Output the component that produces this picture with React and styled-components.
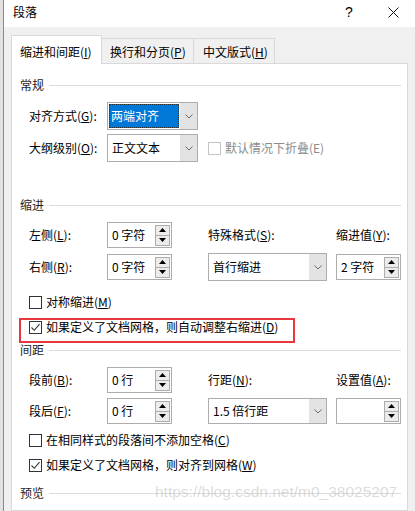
import React from 'react';
import styled, { createGlobalStyle } from 'styled-components';

const Global = createGlobalStyle`
  html, body { margin: 0; padding: 0; background: #f0f0f0; }
  body {
    width: 415px; height: 511px; overflow: hidden;
    font-family: "Noto Sans CJK SC", "Microsoft YaHei", sans-serif;
    font-size: 12px; line-height: 16px; color: #000;
  }
  u { text-underline-offset: 1px; }
`;

const Screen = styled.div`
  position: relative;
  display: flex;
  width: 415px;
  height: 511px;
  overflow: hidden;
`;

const Edge = styled.div`
  width: 3px;
  flex: none;
  background: #e2e2e2;
`;

const Dialog = styled.div`
  flex: 1;
  min-width: 0;
  display: flex;
  flex-direction: column;
  background: #f0f0f0;
  border-left: 1px solid #8a8a8a;
`;

const TitleBar = styled.div`
  height: 27px;
  flex: none;
  display: flex;
  align-items: center;
  background: #fff;
  padding: 0 0 3px 9px;
  box-sizing: border-box;
`;

const Title = styled.span`
  font-size: 12px;
`;

const HelpBtn = styled.div`
  margin-left: auto;
  width: 30px;
  margin-right: 7px;
  text-align: center;
  font-family: "Liberation Sans", sans-serif;
  font-size: 14px;
`;

const CloseBtn = styled.div`
  width: 44px;
  display: flex;
  justify-content: center;
  align-items: center;
`;

const TabBar = styled.div`
  display: flex;
  align-items: flex-end;
  height: 28px;
  margin-top: 8px;
  padding-left: 7px;
  flex: none;
`;

const Tab = styled.div`
  box-sizing: border-box;
  width: ${p => p.$w}px;
  height: ${p => (p.$active ? 29 : 25)}px;
  margin-bottom: ${p => (p.$active ? -1 : 0)}px;
  margin-left: ${p => (p.$first ? 0 : -1)}px;
  padding: ${p => (p.$active ? 8 : 5)}px 0 0 ${p => p.$pl}px;
  border: 1px solid #d9d9d9;
  border-bottom: none;
  background: ${p => (p.$active ? '#fff' : '#f0f0f0')};
  position: ${p => (p.$active ? 'relative' : 'static')};
  white-space: nowrap;
`;

const Panel = styled.div`
  margin-left: 7px;
  width: 397px;
  box-sizing: border-box;
  flex: 1;
  border: 1px solid #d9d9d9;
  background: #fff;
  padding: 13px 6px 0 8px;
`;

const SectionHeader = styled.div`
  display: flex;
  align-items: center;
  height: 16px;
  margin-top: ${p => p.$mt || 0}px;
  color: #1e1e1e;
  &::after {
    content: "";
    flex: 1;
    height: 1px;
    background: #dcdcdc;
    margin-left: 5px;
  }
`;

const Row = styled.div`
  display: grid;
  grid-template-columns: 78px 101px 128px 65px;
  align-items: center;
  height: ${p => p.$h}px;
  margin-top: ${p => p.$mt}px;
  padding-left: 9px;
  white-space: nowrap;
`;

const Label = styled.span`
  white-space: nowrap;
`;

const SelectBox = styled.div`
  box-sizing: border-box;
  display: flex;
  width: ${p => p.$w}px;
  height: ${p => p.$h}px;
  border: 1px solid #adadad;
  background: #fff;
`;

const SelectValue = styled.div`
  flex: 1;
  display: flex;
  align-items: center;
  padding: 1px;
  padding-left: ${p => (p.$selected ? 1 : 4)}px;
`;

const Highlight = styled.div`
  flex: 1;
  align-self: stretch;
  display: flex;
  align-items: center;
  padding-left: 2px;
  background: #0078d7;
  color: #fff;
  outline: 1px dotted #2b2b2b;
  outline-offset: -1px;
`;

const DropBtn = styled.div`
  width: 17px;
  flex: none;
  display: flex;
  align-items: center;
  justify-content: center;
  background: #e3e3e3;
`;

const SpinBox = styled.div`
  box-sizing: border-box;
  display: flex;
  align-items: center;
  width: 65px;
  height: 26px;
  border: 1px solid #adadad;
  background: #fff;
  padding-left: 4px;
`;

const SpinText = styled.span`
  flex: 1;
  white-space: nowrap;
`;

const SpinBtns = styled.div`
  display: flex;
  flex-direction: column;
  width: 15px;
  margin-right: 1px;
`;

const SpinBtn = styled.div`
  box-sizing: border-box;
  height: 11px;
  border: 1px solid #adadad;
  margin-top: ${p => (p.$down ? -1 : 0)}px;
  background: #ececec;
  display: flex;
  align-items: center;
  justify-content: center;
`;

const CheckRow = styled.label`
  position: relative;
  display: flex;
  align-items: center;
  height: 20px;
  margin-top: ${p => p.$mt || 0}px;
  margin-left: ${p => (p.$inline ? 0 : 9)}px;
  gap: 4px;
  white-space: nowrap;
  color: ${p => (p.$disabled ? '#8c8c8c' : '#000')};
  ${p => p.$annotated && `
    &::after {
      content: "";
      position: absolute;
      left: -10px;
      top: 1px;
      width: 276px;
      height: 25px;
      box-sizing: border-box;
      border: 2px solid #e8383d;
      pointer-events: none;
    }
  `}
`;

const Box = styled.span`
  box-sizing: border-box;
  width: 13px;
  height: 13px;
  flex: none;
  border: 1px solid ${p => (p.$disabled ? '#c4c4c4' : '#333')};
  background: #fff;
  display: flex;
  align-items: center;
  justify-content: center;
`;

const Watermark = styled.div`
  position: absolute;
  left: 155px;
  top: 483px;
  font-family: "Liberation Sans", Arial, sans-serif;
  font-size: 15.5px;
  line-height: 18px;
  color: rgba(175, 175, 175, 0.45);
  white-space: nowrap;
  pointer-events: none;
`;

const Chevron = () => (
  <svg width="8" height="5" viewBox="0 0 8 5">
    <path d="M0.5 0.5 L4 4 L7.5 0.5" fill="none" stroke="#6a6a6a" strokeWidth="1" />
  </svg>
);

const Tri = ({ down }) => (
  <svg width="7" height="4" viewBox="0 0 7 4">
    <path d={down ? 'M0 0 H7 L3.5 4 Z' : 'M0 4 H7 L3.5 0 Z'} fill="#000" />
  </svg>
);

const Select = ({ value, w, h = 28, selected }) => (
  <SelectBox $w={w} $h={h}>
    <SelectValue $selected={selected}>
      {selected ? <Highlight>{value}</Highlight> : value}
    </SelectValue>
    <DropBtn><Chevron /></DropBtn>
  </SelectBox>
);

const Spin = ({ value }) => (
  <SpinBox>
    <SpinText>{value}</SpinText>
    <SpinBtns>
      <SpinBtn><Tri /></SpinBtn>
      <SpinBtn $down><Tri down /></SpinBtn>
    </SpinBtns>
  </SpinBox>
);

const Check = ({ checked, disabled, children, mt, inline, annotated }) => (
  <CheckRow $mt={mt} $inline={inline} $disabled={disabled} $annotated={annotated}>
    <Box $disabled={disabled}>
      {checked && (
        <svg width="11" height="11" viewBox="0 0 11 11">
          <path d="M1.5 5.5 L4.3 8.3 L9.5 2.2" fill="none" stroke="#333" strokeWidth="1.1" />
        </svg>
      )}
    </Box>
    <span>{children}</span>
  </CheckRow>
);

export default function App() {
  return (
    <>
      <Global />
      <Screen>
        <Edge />
        <Dialog>
          <TitleBar>
            <Title>段落</Title>
            <HelpBtn>?</HelpBtn>
            <CloseBtn>
              <svg width="11" height="11" viewBox="0 0 11 11">
                <path d="M0.5 0.5 L10.5 10.5 M10.5 0.5 L0.5 10.5" stroke="#111" strokeWidth="1" />
              </svg>
            </CloseBtn>
          </TitleBar>

          <TabBar>
            <Tab $active $first $w={91} $pl={8}>缩进和间距(<u>I</u>)</Tab>
            <Tab $w={93} $pl={8}>换行和分页(<u>P</u>)</Tab>
            <Tab $w={82} $pl={9}>中文版式(<u>H</u>)</Tab>
          </TabBar>

          <Panel>
            <SectionHeader>常规</SectionHeader>
            <Row $h={28} $mt={9}>
              <Label>对齐方式(<u>G</u>):</Label>
              <Select value="两端对齐" w={91} selected />
            </Row>
            <Row $h={28} $mt={4}>
              <Label>大纲级别(<u>O</u>):</Label>
              <Select value="正文文本" w={91} />
              <Check disabled inline>默认情况下折叠(E)</Check>
            </Row>

            <SectionHeader $mt={35}>缩进</SectionHeader>
            <Row $h={26} $mt={9}>
              <Label>左侧(<u>L</u>):</Label>
              <Spin value="0 字符" />
              <Label>特殊格式(<u>S</u>):</Label>
              <Label>缩进值(<u>Y</u>):</Label>
            </Row>
            <Row $h={28} $mt={5}>
              <Label>右侧(<u>R</u>):</Label>
              <Spin value="0 字符" />
              <Select value="首行缩进" w={119} />
              <Spin value="2 字符" />
            </Row>
            <Check mt={11}>对称缩进(<u>M</u>)</Check>
            <Check checked mt={5} annotated>如果定义了文档网格，则自动调整右缩进(<u>D</u>)</Check>

            <SectionHeader $mt={5}>间距</SectionHeader>
            <Row $h={26} $mt={9}>
              <Label>段前(<u>B</u>):</Label>
              <Spin value="0 行" />
              <Label>行距(<u>N</u>):</Label>
              <Label>设置值(<u>A</u>):</Label>
            </Row>
            <Row $h={26} $mt={5}>
              <Label>段后(<u>F</u>):</Label>
              <Spin value="0 行" />
              <Select value="1.5 倍行距" w={119} h={26} />
              <Spin value="" />
            </Row>
            <Check mt={6}>在相同样式的段落间不添加空格(<u>C</u>)</Check>
            <Check checked mt={5}>如果定义了文档网格，则对齐到网格(<u>W</u>)</Check>

            <SectionHeader $mt={10}>预览</SectionHeader>
          </Panel>
        </Dialog>
        <Watermark>https://blog.csdn.net/m0_38025207</Watermark>
      </Screen>
    </>
  );
}
